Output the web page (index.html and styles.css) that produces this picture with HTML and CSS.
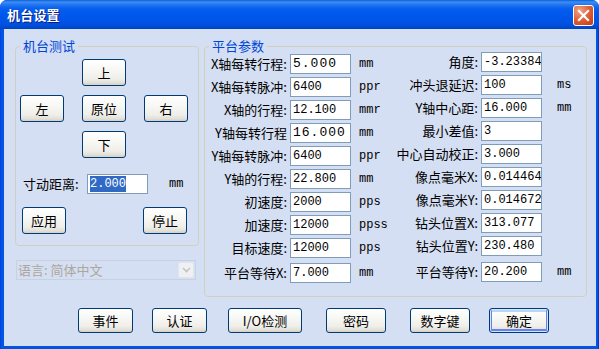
FILE: index.html
```html
<!DOCTYPE html>
<html lang="zh">
<head>
<meta charset="utf-8">
<title>机台设置</title>
<link rel="stylesheet" href="styles.css">
</head>
<body>
<div class="window">
  <div class="titlebar">
    <span class="title">机台设置</span>
    <button class="close" aria-label="关闭">
      <svg width="13" height="13" viewBox="0 0 13 13"><path d="M2 2 L11 11 M11 2 L2 11" stroke="#fff" stroke-width="2.2" stroke-linecap="square"/></svg>
    </button>
  </div>
  <div class="client">
    <div class="panels">
      <div class="left-col">
        <div class="group group-test">
          <div class="legend">机台测试</div>
          <div class="jog">
            <button class="btn jog-up">上</button>
            <button class="btn jog-left">左</button>
            <button class="btn jog-home">原位</button>
            <button class="btn jog-right">右</button>
            <button class="btn jog-down">下</button>
          </div>
          <div class="step-row">
            <span class="step-label">寸动距离:</span>
            <div class="field field-step"><span class="sel">2.000</span></div>
            <span class="unit step-unit">mm</span>
          </div>
          <div class="action-row">
            <button class="btn">应用</button>
            <button class="btn">停止</button>
          </div>
        </div>
        <div class="combo">
          <span class="combo-text">语言: 简体中文</span>
          <span class="combo-btn">
            <svg width="9" height="6" viewBox="0 0 9 6"><path d="M1 1 L4.5 4.5 L8 1" fill="none" stroke="#C3C3C3" stroke-width="1.6"/></svg>
          </span>
        </div>
      </div>
      <div class="group group-params">
        <div class="legend">平台参数</div>
        <div class="params">
          <div class="param-col col-a">
            <div class="row"><span class="label">X轴每转行程:</span><div class="field wide">5.000</div><span class="unit">mm</span></div>
            <div class="row"><span class="label">X轴每转脉冲:</span><div class="field">6400</div><span class="unit">ppr</span></div>
            <div class="row"><span class="label">X轴的行程:</span><div class="field">12.100</div><span class="unit">mmr</span></div>
            <div class="row"><span class="label">Y轴每转行程</span><div class="field wide">16.000</div><span class="unit">mm</span></div>
            <div class="row"><span class="label">Y轴每转脉冲:</span><div class="field">6400</div><span class="unit">ppr</span></div>
            <div class="row"><span class="label">Y轴的行程:</span><div class="field">22.800</div><span class="unit">mm</span></div>
            <div class="row"><span class="label">初速度:</span><div class="field">2000</div><span class="unit">pps</span></div>
            <div class="row"><span class="label">加速度:</span><div class="field">12000</div><span class="unit">ppss</span></div>
            <div class="row"><span class="label">目标速度:</span><div class="field">12000</div><span class="unit">pps</span></div>
            <div class="row row-last"><span class="label">平台等待X:</span><div class="field">7.000</div><span class="unit">mm</span></div>
          </div>
          <div class="param-col col-b">
            <div class="row"><span class="label">角度:</span><div class="field">-3.23384</div><span class="unit"></span></div>
            <div class="row"><span class="label">冲头退延迟:</span><div class="field">100</div><span class="unit">ms</span></div>
            <div class="row"><span class="label">Y轴中心距:</span><div class="field">16.000</div><span class="unit">mm</span></div>
            <div class="row"><span class="label">最小差值:</span><div class="field">3</div><span class="unit"></span></div>
            <div class="row"><span class="label">中心自动校正:</span><div class="field">3.000</div><span class="unit"></span></div>
            <div class="row"><span class="label">像点毫米X:</span><div class="field">0.014464</div><span class="unit"></span></div>
            <div class="row"><span class="label">像点毫米Y:</span><div class="field">0.014672</div><span class="unit"></span></div>
            <div class="row"><span class="label">钻头位置X:</span><div class="field">313.077</div><span class="unit"></span></div>
            <div class="row"><span class="label">钻头位置Y:</span><div class="field">230.480</div><span class="unit"></span></div>
            <div class="row row-last"><span class="label">平台等待Y:</span><div class="field">20.200</div><span class="unit">mm</span></div>
          </div>
        </div>
      </div>
    </div>
    <div class="footer">
      <button class="btn fbtn w55">事件</button>
      <button class="btn fbtn w55">认证</button>
      <button class="btn fbtn w74 ml2">I/O检测</button>
      <button class="btn fbtn w60 ml5">密码</button>
      <button class="btn fbtn w60 ml5">数字键</button>
      <button class="btn fbtn w60 default">确定</button>
    </div>
  </div>
</div>
</body>
</html>
```

FILE: styles.css
```css
html, body {
  margin: 0;
  padding: 0;
  background: #ffffff;
}

.window {
  width: 599px;
  height: 349px;
  box-sizing: border-box;
  background: linear-gradient(90deg, #0831D9 0, #0055E5 1px, #0055E5 calc(100% - 1px), #001EA0 100%);
  border-radius: 7px 7px 0 0;
  overflow: hidden;
  display: flex;
  flex-direction: column;
  font-family: "Noto Sans CJK SC", "Noto Sans", sans-serif;
  font-size: 13px;
  color: #000;
}

.titlebar {
  height: 29px;
  flex: 0 0 29px;
  box-sizing: border-box;
  display: flex;
  align-items: center;
  justify-content: space-between;
  padding: 0 5px 0 7px;
  background: linear-gradient(180deg, #0A5ED8 0px, #3D8EF3 2px, #2A7BF0 4px, #0961EE 8px, #0058EE 13px, #0055E8 20px, #0050DE 25px, #0046C8 28px, #0040B8 29px);
}

.title {
  color: #ffffff;
  font-weight: bold;
  font-size: 13px;
  line-height: 16px;
  letter-spacing: 0.2px;
  text-shadow: 1px 1px 0 #0A1B80;
  margin-top: 1px;
}

.close {
  width: 21px;
  height: 21px;
  padding: 0;
  box-sizing: border-box;
  border: 1px solid #ffffff;
  border-radius: 3px;
  background: radial-gradient(circle at 30% 25%, #F0A58A 0, #E2643E 45%, #D04A22 75%, #C23C18 100%);
  display: flex;
  align-items: center;
  justify-content: center;
  margin-top: 1px;
}

.client {
  margin: 0 3px 3px 4px;
  flex: 1;
  background: #D5DFF3;
  display: flex;
  flex-direction: column;
}

.panels {
  display: flex;
  padding: 17px 0 0 11px;
  gap: 5px;
}

.left-col {
  display: flex;
  flex-direction: column;
}

.group {
  position: relative;
  box-sizing: border-box;
  border: 1px solid #D0D0BF;
  border-radius: 4px;
}

.legend {
  position: absolute;
  top: -9px;
  left: 4px;
  padding: 0 3px;
  background: #D5DFF3;
  color: #0046D5;
  font-size: 13px;
  line-height: 16px;
}

.group-test {
  width: 184px;
  height: 200px;
  padding: 12px 0 0 0;
}

.btn {
  box-sizing: border-box;
  width: 44px;
  height: 27px;
  padding: 0;
  border: 1px solid #003C74;
  border-radius: 3px;
  background: linear-gradient(180deg, #FFFFFF 0%, #F7F7F4 40%, #EFEEE9 75%, #E3E1D9 90%, #D6D0C5 100%);
  font-family: "Noto Sans CJK SC", sans-serif;
  font-size: 13px;
  line-height: 15px;
  color: #000;
}

.jog {
  display: grid;
  grid-template-columns: 44px 44px 44px;
  grid-template-rows: 27px 27px 27px;
  column-gap: 18px;
  row-gap: 9px;
  padding-left: 4px;
}

.jog-up { grid-column: 2; grid-row: 1; }
.jog-left { grid-column: 1; grid-row: 2; }
.jog-home { grid-column: 2; grid-row: 2; }
.jog-right { grid-column: 3; grid-row: 2; }
.jog-down { grid-column: 2; grid-row: 3; }

.step-row {
  display: flex;
  align-items: center;
  margin-top: 16px;
  padding-left: 7px;
  height: 20px;
}

.step-label {
  width: 64px;
  line-height: 20px;
}

.field {
  box-sizing: border-box;
  width: 61px;
  height: 20px;
  flex: 0 0 61px;
  border: 1px solid #7F9DB9;
  background: #ffffff;
  padding-left: 2px;
  font-family: "Liberation Mono", monospace;
  font-size: 12px;
  line-height: 18px;
  white-space: nowrap;
  overflow: hidden;
  color: #000;
}

.field.wide {
  font-size: 13px;
  letter-spacing: 1px;
}

.sel {
  background: #316AC5;
  color: #ffffff;
  padding: 1px 0;
}

.unit {
  font-family: "Liberation Mono", monospace;
  font-size: 12px;
  line-height: 20px;
}

.step-unit {
  margin-left: 21px;
}

.action-row {
  display: flex;
  justify-content: space-between;
  margin-top: 13px;
  padding: 0 11px 0 6px;
}

.combo {
  box-sizing: border-box;
  width: 180px;
  height: 20px;
  margin: 14px 0 0 1px;
  border: 1px solid #C9D1E0;
  background: #D5DFF3;
  display: flex;
  align-items: center;
  justify-content: space-between;
  padding: 0 1px 0 1px;
}

.combo-text {
  color: #ACA899;
  font-size: 13px;
  line-height: 18px;
}

.combo-btn {
  box-sizing: border-box;
  width: 16px;
  height: 16px;
  background: #EEF0F3;
  border: 1px solid #E2E5EA;
  border-radius: 2px;
  display: flex;
  align-items: center;
  justify-content: center;
}

.group-params {
  width: 383px;
  height: 251px;
  padding-top: 5px;
}

.params {
  display: flex;
}

.param-col {
  display: flex;
  flex-direction: column;
}

.col-a {
  margin-top: 2px;
  width: 185px;
}

.row {
  display: flex;
  align-items: center;
  height: 20px;
  margin-bottom: 3px;
}

.row-last {
  margin-top: 2px;
}

.col-b .row-last {
  margin-top: 3px;
}

.label {
  box-sizing: border-box;
  text-align: right;
  white-space: nowrap;
  line-height: 20px;
  margin-right: 3px;
}

.col-a .label {
  width: 82px;
}

.col-b .label {
  width: 88px;
}

.col-a .unit {
  padding-left: 8px;
}

.col-b .unit {
  padding-left: 15px;
}

.footer {
  display: flex;
  gap: 19px;
  padding: 11px 0 0 74px;
}

.fbtn {
  height: 25px;
}

.w55 { width: 55px; }
.w60 { width: 60px; }
.w74 { width: 74px; }
.ml2 { margin-left: 2px; }
.ml5 { margin-left: 5px; }

.default {
  box-shadow: inset 0 0 0 1px #CEE7FF, inset 0 -1px 0 2px #6982EE, inset 0 1px 0 2px #BCD4F6;
}
```
